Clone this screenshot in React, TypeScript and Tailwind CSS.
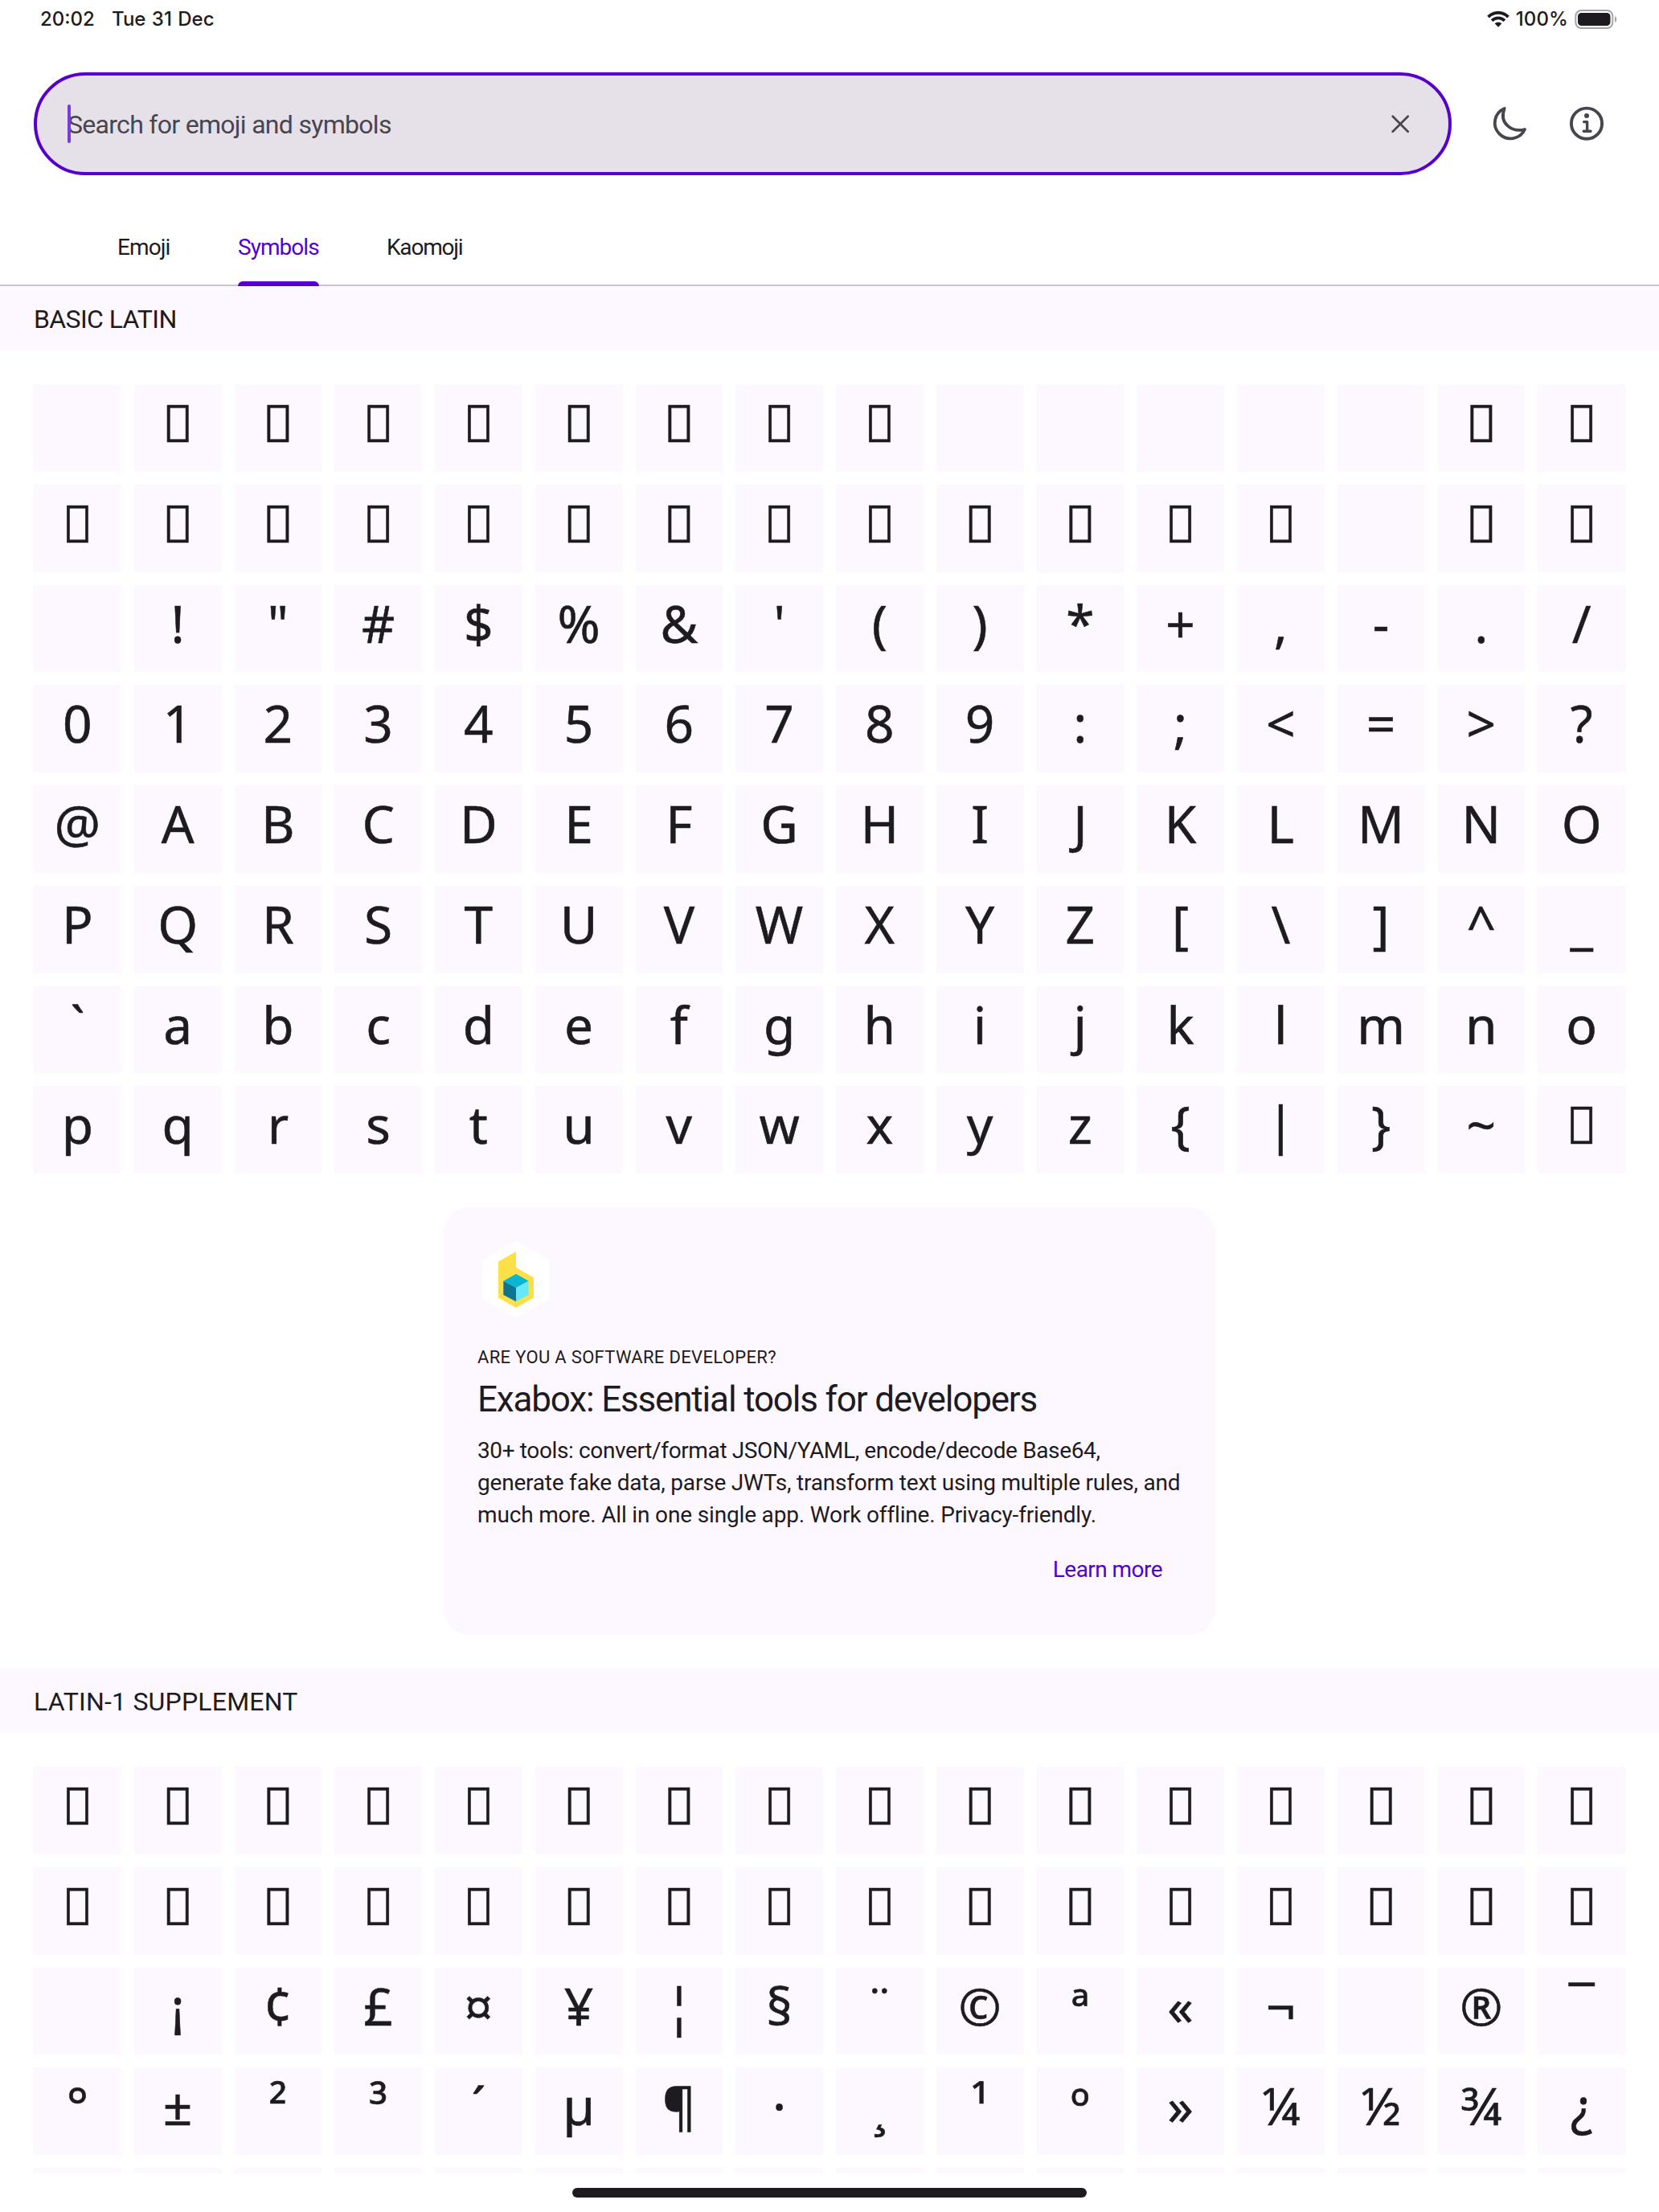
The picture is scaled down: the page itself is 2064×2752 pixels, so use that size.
const MISSING = "\uFFFF";

// Code points that have no visible shape inside a tile.
const BLANK = new Set([0x00, 0x09, 0x0a, 0x0b, 0x0c, 0x0d, 0x1d, 0x20, 0xa0, 0xad]);

function glyphFor(code: number): string {
  if (BLANK.has(code)) return "";
  if (code < 0x20 || (code >= 0x7f && code < 0xa0)) return MISSING;
  return String.fromCharCode(code);
}

function range(start: number, count: number): number[] {
  return Array.from({ length: count }, (_, i) => start + i);
}

function WifiIcon() {
  return (
    <svg className="h-5 w-7" viewBox="0 0 28 20" fill="none" stroke="currentColor">
      <path d="M1.55 7.05A17.6 17.6 0 0 1 26.45 7.05" strokeWidth="3.9" />
      <path d="M6.08 11.58A11.2 11.2 0 0 1 21.92 11.58" strokeWidth="3.8" />
      <path d="M14 19.8L9.62 15.3A6.2 6.2 0 0 1 18.38 15.3Z" fill="currentColor" stroke="none" />
    </svg>
  );
}

function BatteryIcon() {
  return (
    <svg className="h-6 w-[54px]" viewBox="0 0 54 24" fill="none">
      <rect x="1.3" y="1" width="46" height="22" rx="7" stroke="#a5a4a6" strokeWidth="2" />
      <rect x="4" y="4" width="40.5" height="16" rx="4.5" fill="#1d1b20" />
      <path d="M50 8C53 9.2 53 14.8 50 16Z" fill="#a5a4a6" />
    </svg>
  );
}

function CloseIcon() {
  return (
    <svg className="size-6" viewBox="0 0 24 24" stroke="currentColor" strokeWidth="2.7" strokeLinecap="round">
      <path d="M2.7 2.7L21.7 21.7M21.7 2.7L2.7 21.7" />
    </svg>
  );
}

function MoonIcon() {
  return (
    <svg className="size-12" viewBox="0 0 48 48" fill="none" stroke="currentColor" strokeWidth="3.8" strokeLinejoin="round">
      <path d="M17.7 4.9A19.5 19.5 0 1 0 43 31C27.5 35 10.5 24 17.7 4.9Z" />
    </svg>
  );
}

function InfoIcon() {
  return (
    <svg className="size-12" viewBox="0 0 48 48" fill="none" stroke="currentColor" strokeLinecap="round" strokeLinejoin="round">
      <circle cx="24" cy="23.7" r="19.1" strokeWidth="3.9" />
      <circle cx="24" cy="14" r="3" fill="currentColor" stroke="none" />
      <path d="M20.6 21.6H24.6V33.3M20.2 33.3H29" strokeWidth="3.4" />
    </svg>
  );
}

function ExaboxLogo() {
  return (
    <svg className="size-24" viewBox="0 0 96 96">
      <path d="M48 0L89.5 24V72L48 95.8L6.5 72V24Z" fill="#ffffff" />
      <path d="M48 13V33L70 45.6V70.6L48 83L26 70.6V25.6Z" fill="#fde047" />
      <path d="M48 41L63.7 49.7L48 58.3L32.3 49.7Z" fill="#06b6d4" />
      <path d="M32.3 49.7L48 58.3V75.3L32.3 67Z" fill="#0e7490" />
      <path d="M63.7 49.7L48 58.3V75.3L63.7 67Z" fill="#67e8f9" />
    </svg>
  );
}

function SectionHeader({ children, className }: { children: string; className: string }) {
  return (
    <h2 className={`h-20 shrink-0 bg-[#fdf8ff] pl-[42px] text-[32px] leading-[82px] ${className}`}>{children}</h2>
  );
}

function GlyphGrid({ codes, trailing = 0 }: { codes: number[]; trailing?: number }) {
  return (
    <div className="grid shrink-0 grid-cols-16 gap-4 px-[42px] pt-[42px] font-['Noto_Sans',sans-serif] [-webkit-text-stroke:0.55px_#1d1b20]">
      {codes.map((code) => (
        <div key={code} className="flex h-[108.75px] justify-center bg-[#fdf8ff] text-[64px] leading-[96px]">
          {glyphFor(code)}
        </div>
      ))}
      {range(0, trailing).map((i) => (
        <div key={`trailing-${i}`} className="h-[7px] bg-[#fdf8ff]" />
      ))}
    </div>
  );
}

function PromoCard() {
  return (
    <article className="mx-auto my-[42px] flex h-[532px] w-[960px] shrink-0 flex-col rounded-[32px] bg-[#fdf8ff] px-[42px] pt-[42px]">
      <ExaboxLogo />
      <p className="mt-8 text-[22px] leading-[33px] tracking-[0.33px]">ARE YOU A SOFTWARE DEVELOPER?</p>
      <h3 className="mt-2 text-[44px] leading-[56px] tracking-[-1.17px]">Exabox: Essential tools for developers</h3>
      <p className="mt-4 text-[28px] leading-10 whitespace-nowrap">
        <span className="block tracking-[-0.37px]">30+ tools: convert/format JSON/YAML, encode/decode Base64,</span>
        <span className="block tracking-[-0.21px]">generate fake data, parse JWTs, transform text using multiple rules, and</span>
        <span className="block tracking-[-0.16px]">much more. All in one single app. Work offline. Privacy-friendly.</span>
      </p>
      <button className="mt-7 mr-6 self-end text-[28px] leading-10 tracking-[-0.55px] text-[#5500cc]">Learn more</button>
    </article>
  );
}

export default function App() {
  return (
    <div className="flex h-[2752px] w-[2064px] flex-col overflow-hidden bg-white font-[Roboto,sans-serif] text-[#1d1b20]">
      <div className="flex h-[47px] shrink-0 items-center pr-[51px] pl-[50px] font-[Inter,sans-serif] text-2xl font-medium">
        <span className="w-[67px]">20:02</span>
        <span className="ml-[22px] [word-spacing:1px]">Tue 31 Dec</span>
        <div className="ml-auto flex items-center">
          <WifiIcon />
          <span className="mr-2 ml-2 tracking-[0.1px]">100%</span>
          <BatteryIcon />
        </div>
      </div>

      <header className="mt-[43px] flex shrink-0 items-center gap-12 pl-[42px] text-[#49454f]">
        <div className="relative flex h-32 w-[1764px] items-center justify-between rounded-full border-4 border-[#5500cc] bg-[#e6e0e9] pr-12 pl-[38px]">
          <span className="mt-0.5 text-[32px] leading-10 tracking-[-0.7px]">Search for emoji and symbols</span>
          <CloseIcon />
          <span className="absolute top-9 left-[38px] h-12 w-1 rounded-full bg-[#7a3bd6]" />
        </div>
        <MoonIcon />
        <InfoIcon />
      </header>

      <nav className="flex h-[138px] shrink-0 items-stretch gap-[84px] border-b-2 border-[#cac4d0] pl-[146px] text-[28px] leading-[180px]">
        <span className="w-[66px] tracking-[-0.9px]">Emoji</span>
        <span className="relative w-[101px] tracking-[-0.95px] text-[#5500cc]">
          Symbols
          <span className="absolute -bottom-0.5 left-0 h-1.5 w-full rounded-t-md bg-[#5500cc]" />
        </span>
        <span className="w-[96px] tracking-[-1.2px]">Kaomoji</span>
      </nav>

      <main className="flex h-[2348px] shrink-0 flex-col overflow-hidden">
        <SectionHeader className="tracking-[-0.6px]">BASIC LATIN</SectionHeader>
        <GlyphGrid codes={range(0x00, 128)} />
        <PromoCard />
        <SectionHeader className="tracking-[0.2px]">LATIN-1 SUPPLEMENT</SectionHeader>
        <GlyphGrid codes={range(0x80, 64)} trailing={16} />
      </main>

      <div className="mx-auto mt-[18px] h-3 w-[640px] shrink-0 rounded-full bg-[#1d1b20]" />
    </div>
  );
}
